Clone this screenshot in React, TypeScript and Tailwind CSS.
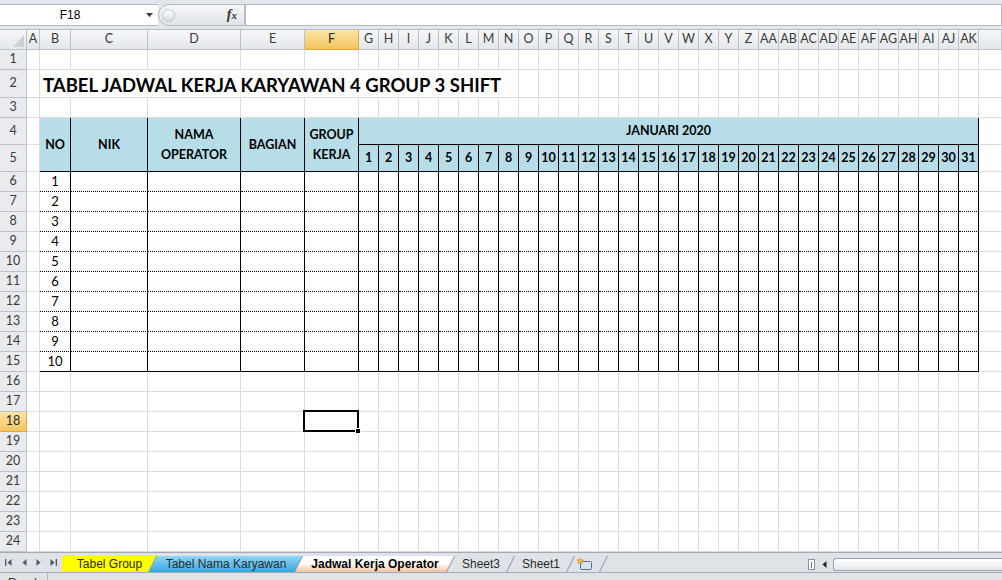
import React from "react"

const letter = (n: number) => String.fromCharCode(64 + n)
const COLS = Array.from({ length: 37 }, (_, i) => (i < 26 ? letter(i + 1) : "A" + letter(i - 25)))
const ROWS = Array.from({ length: 24 }, (_, i) => i + 1)
const DAYS = Array.from({ length: 31 }, (_, i) => i + 1)

const SEL_COL = 6 // F
const SEL_ROW = 18

const gridCell = "border-r border-b border-[#dadcdd] bg-white"
const colHead =
  "flex items-center justify-center border-r border-b border-[#bcc2ca] bg-linear-to-b from-[#f6f7f9] to-[#e4e7eb] text-[12.5px] leading-none text-[#3a3a3a]"
const colHeadSel =
  "flex items-center justify-center border-r border-b border-[#e2a640] bg-linear-to-b from-[#fbe6a6] to-[#f4c45c] text-[12.5px] leading-none text-[#2a2a2a]"
const rowHead =
  "flex items-center justify-center border-r border-b border-[#bcc2ca] bg-[#e9ebee] text-[12.5px] leading-none text-[#3a3a3a]"
const rowHeadSel =
  "flex items-center justify-center border-r border-b border-[#e2a640] bg-linear-to-b from-[#fbe6a6] to-[#f4c45c] text-[12.5px] leading-none text-[#2a2a2a]"

// rows 4-15 (B..AK) belong to the schedule table, row 2 (B..N) to the title
function covered(r: number, c: number) {
  if (r >= 4 && r <= 15 && c >= 2 && c <= 37) return true
  if (r === 2 && c >= 2 && c <= 14) return true
  return false
}

function FormulaBar() {
  return (
    <div className="flex h-[30px] shrink-0 items-start border-b border-[#b7bec7] bg-[#e3e7ec] pt-[4px] font-['Liberation_Sans',sans-serif]">
      <div className="flex h-[22px] w-[158px] items-center border-y border-[#b4bbc5] bg-white">
        <span className="w-[140px] text-center text-[12px] text-black">F18</span>
        <svg width="7" height="4" viewBox="0 0 7 4" className="ml-[6px]">
          <path d="M0 0h7L3.5 4z" fill="#3b3b3b" />
        </svg>
      </div>
      <div className="flex h-[22px] w-[87px] items-center rounded-l-[11px] border border-[#b4bbc5] bg-linear-to-b from-[#f6f7f9] to-[#dfe3e8]">
        <div className="ml-[3px] h-[13px] w-[13px] rounded-full border border-[#c4cad1] bg-linear-to-b from-white to-[#d6dbe1]" />
        <span className="ml-auto mr-[7px] font-['Liberation_Serif',serif] text-[14px] font-bold italic leading-none text-[#333]">
          f<span className="text-[11px]">x</span>
        </span>
      </div>
      <div className="h-[22px] flex-1 border border-[#b4bbc5] bg-white" />
    </div>
  )
}

function Schedule() {
  const head =
    "flex items-center justify-center border-r border-b border-black bg-[#b7dee8] text-center text-[12.5px] font-bold leading-[20px] text-black"
  return (
    <div className="-ml-px -mt-px grid grid-cols-[31px_77px_93px_64px_54px_repeat(31,20px)] grid-rows-[27px_27px_repeat(10,20px)] border-l border-t border-black bg-white [grid-column:3/39] [grid-row:5/17]">
      <div className={`${head} row-span-2`}>NO</div>
      <div className={`${head} row-span-2`}>NIK</div>
      <div className={`${head} row-span-2`}>
        NAMA
        <br />
        OPERATOR
      </div>
      <div className={`${head} row-span-2`}>BAGIAN</div>
      <div className={`${head} row-span-2`}>
        GROUP
        <br />
        KERJA
      </div>
      <div className={`${head} [grid-column:span_31/span_31]`}>JANUARI 2020</div>
      {DAYS.map((d) => (
        <div key={d} className={head}>
          {d}
        </div>
      ))}
      {Array.from({ length: 10 }, (_, i) => {
        const last = i === 9
        const cell = last
          ? "flex items-center justify-center border-r border-b border-black text-[13px] leading-none"
          : "flex items-center justify-center border-r border-b border-black [border-bottom-style:dotted] text-[13px] leading-none"
        return (
          <React.Fragment key={i}>
            <div className={cell}>{i + 1}</div>
            {Array.from({ length: 35 }, (_, j) => (
              <div key={j} className={cell} />
            ))}
          </React.Fragment>
        )
      })}
    </div>
  )
}

function ActiveCell() {
  return (
    <div className="relative border-r border-b border-[#dadcdd] bg-white">
      <div className="absolute -left-[2px] -top-[2px] -right-[1px] -bottom-[1px] border-2 border-black" />
      <div className="absolute -right-[3px] -bottom-[3px] h-[6px] w-[6px] border border-white bg-black" />
    </div>
  )
}

function Sheet() {
  const cells: React.ReactNode[] = []
  cells.push(
    <div key="corner" className="relative border-r border-b border-[#bcc2ca] bg-linear-to-b from-[#f6f7f9] to-[#e4e7eb]">
      <svg width="11" height="12" viewBox="0 0 11 12" className="absolute right-[2px] bottom-[2px]">
        <path d="M11 0v12H0z" fill="#cdd1d6" />
      </svg>
    </div>,
  )
  COLS.forEach((l, i) =>
    cells.push(
      <div key={"h" + l} className={i + 1 === SEL_COL ? colHeadSel : colHead}>
        {l}
      </div>,
    ),
  )
  cells.push(<div key="h-end" className={colHead} />)

  ROWS.forEach((r) => {
    cells.push(
      <div key={"r" + r} className={r === SEL_ROW ? rowHeadSel : rowHead}>
        {r}
      </div>,
    )
    COLS.forEach((_, i) => {
      const c = i + 1
      if (covered(r, c)) return
      if (r === SEL_ROW && c === SEL_COL) cells.push(<ActiveCell key={`${r}-${c}`} />)
      else cells.push(<div key={`${r}-${c}`} className={gridCell} />)
    })
    cells.push(<div key={`${r}-end`} className={gridCell} />)
  })

  return (
    <div className="grid shrink-0 grid-cols-[27px_13px_31px_77px_93px_64px_54px_repeat(31,20px)_23px] grid-rows-[20px_20px_28px_20px_27px_27px_repeat(19,20px)] bg-white">
      <div className="flex items-center whitespace-nowrap border-r border-b border-[#dadcdd] bg-white pl-[3px] pt-[3px] text-[18.5px] font-bold leading-none text-black [grid-column:3/16] [grid-row:3/4]">
        TABEL JADWAL KERJA KARYAWAN 4 GROUP 3 SHIFT
      </div>
      <Schedule />
      {cells}
    </div>
  )
}

type TabProps = {
  label: string
  width: string
  fill: string
  first?: boolean
  bold?: boolean
  children?: React.ReactNode
}

function Tab({ label, width, fill, first, bold, children }: TabProps) {
  const outer = first
    ? "[clip-path:polygon(0_0,100%_0,calc(100%_-_8px)_100%,0_100%)]"
    : "[clip-path:polygon(8px_0,100%_0,calc(100%_-_8px)_100%,0_100%)]"
  const inner = first
    ? "[clip-path:polygon(0_0,calc(100%_-_1px)_0,calc(100%_-_9px)_100%,0_100%)]"
    : "[clip-path:polygon(8px_0,calc(100%_-_1px)_0,calc(100%_-_9px)_100%,0_100%)]"
  return (
    <div className={`relative h-[16px] shrink-0 bg-[#8e96a1] ${width} ${outer} ${first ? "" : "-ml-[8px]"}`}>
      <div className={`absolute inset-0 ${fill} ${inner}`} />
      <div
        className={`relative flex h-full items-center justify-center text-[12px] leading-none ${
          bold ? "font-bold text-black" : "text-[#2b2b2b]"
        }`}
      >
        {children ?? label}
      </div>
    </div>
  )
}

function TabBar() {
  return (
    <div className="flex h-[21px] shrink-0 items-start border-y border-[#a3aab4] bg-[#dfe3e8] font-['Liberation_Sans',sans-serif]">
      <div className="flex h-[19px] w-[62px] shrink-0 items-center text-[#4f5a66]">
        <svg width="7" height="7" viewBox="0 0 7 7" className="ml-[5px]">
          <rect x="0" y="0" width="1.3" height="7" fill="currentColor" />
          <path d="M6.5 0v7L2.5 3.5z" fill="currentColor" />
        </svg>
        <svg width="5" height="7" viewBox="0 0 5 7" className="ml-[10px]">
          <path d="M4.5 0v7L0.5 3.5z" fill="currentColor" />
        </svg>
        <svg width="5" height="7" viewBox="0 0 5 7" className="ml-[9px]">
          <path d="M0.5 0v7L4.5 3.5z" fill="currentColor" />
        </svg>
        <svg width="7" height="7" viewBox="0 0 7 7" className="ml-[9px]">
          <path d="M0.5 0v7L4.5 3.5z" fill="currentColor" />
          <rect x="5.7" y="0" width="1.3" height="7" fill="currentColor" />
        </svg>
      </div>
      <div className="flex pt-[3px]">
        <Tab label="Tabel Group" width="w-[95px]" fill="bg-[#ffff00]" first />
        <Tab label="Tabel Nama Karyawan" width="w-[154px]" fill="bg-linear-to-b from-[#8fd6f6] to-[#2fa9e2]" />
        <Tab
          label="Jadwal Kerja Operator"
          width="w-[160px]"
          fill="bg-linear-to-b from-white from-[45%] to-[#f5c39c]"
          bold
        />
        <Tab label="Sheet3" width="w-[68px]" fill="bg-[#dfe3e8]" />
        <Tab label="Sheet1" width="w-[68px]" fill="bg-[#dfe3e8]" />
        <Tab label="" width="w-[41px]" fill="bg-[#dfe3e8]">
          <svg width="18" height="14" viewBox="0 0 18 14" className="-ml-[6px]">
            <rect x="4.5" y="4.5" width="11" height="8" rx="1" fill="#d7e4f2" stroke="#5b6f86" />
            <path d="M4 0.5l1 2.2 2.3.3-1.7 1.5.5 2.3L4 5.6 1.9 6.8l.5-2.3L.7 3l2.3-.3z" fill="#f6c342" stroke="#d8902a" strokeWidth="0.6" />
          </svg>
        </Tab>
      </div>
      <div className="flex-1" />
      <div className="mt-[6px] flex h-[11px] w-[7px] shrink-0 items-center justify-center border border-[#8a94a1] bg-white">
        <div className="h-[6px] w-px bg-[#6b7582]" />
      </div>
      <svg width="5" height="7" viewBox="0 0 5 7" className="ml-[7px] mt-[8px] shrink-0">
        <path d="M4.5 0v7L0.5 3.5z" fill="#222" />
      </svg>
      <div className="ml-[6px] mt-[5px] h-[13px] w-[169px] shrink-0 rounded-l-[3px] border border-r-0 border-[#9aa3ae] bg-linear-to-b from-white to-[#e4e8ed]" />
    </div>
  )
}

function StatusBar() {
  return (
    <div className="flex h-[22px] shrink-0 items-start bg-[#dfe3e8] font-['Liberation_Sans',sans-serif]">
      <span className="w-[48px] border-r border-[#b4bbc5] pl-[8px] pt-[4px] text-[12px] leading-none text-[#333]">Ready</span>
    </div>
  )
}

export default function App() {
  return (
    <div className="flex h-[580px] w-[1002px] flex-col overflow-hidden bg-[#dfe3e8] font-['Lato',sans-serif]">
      <FormulaBar />
      <Sheet />
      <TabBar />
      <StatusBar />
    </div>
  )
}
